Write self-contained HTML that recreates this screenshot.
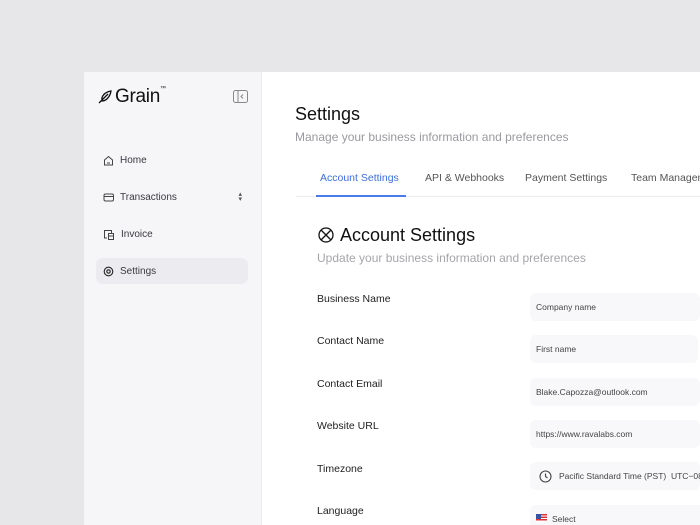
<!DOCTYPE html>
<html style="width:700px;height:525px;overflow:hidden"><head><style>
*{margin:0;padding:0;box-sizing:border-box}
body{width:700px;height:525px;background:#e7e6e8;font-family:"Liberation Sans",sans-serif;position:relative;overflow:hidden}
.card{position:absolute;left:84px;top:72px;width:616px;height:453px;background:#fff;border-top-left-radius:2px}
.side{position:absolute;left:0;top:0;width:178px;height:453px;background:#f6f5f8;border-right:1px solid #ebeaee}
.abs{position:absolute}
.nav{position:absolute;left:12px;width:152px;height:26px;border-radius:7px;font-size:10px;color:#3a3a40;display:flex;align-items:center;padding-left:7px}
.nav svg{margin-right:6px}
.lbl{position:absolute;left:317px;font-size:10.5px;color:#222}
.inp{position:absolute;left:530px;height:28px;background:#f8f7fa;border-radius:6px;font-size:8.5px;color:#444;display:flex;align-items:center;padding-left:6px;width:170px}
.tab{position:absolute;top:172px;font-size:10.5px;color:#555}
</style></head><body>
<div class="card"></div>
<div class="side abs" style="left:84px;top:72px"></div>
<svg class="abs" style="left:97px;top:89px" width="16" height="16" viewBox="0 0 16 16" fill="none" stroke="#111" stroke-width="1.3"><path d="M2 14 L7 9 M5 12 C4 7 8 3 14 2 C13 8 9 12 5 12Z M7 9 L11 5"/></svg>
<div class="abs" style="left:115px;top:86px;font-size:19px;color:#111;letter-spacing:-0.3px">Grain<span style="font-size:6px;vertical-align:top">™</span></div>
<svg class="abs" style="left:233px;top:90px" width="15" height="13" viewBox="0 0 15 13" fill="none" stroke="#888" stroke-width="1"><rect x="0.5" y="0.5" width="14" height="12" rx="2"/><path d="M5 1v11M10 4.5 8 6.5l2 2"/></svg>
<div class="nav" style="left:96px;top:147px"><svg width="11" height="11" viewBox="0 0 11 11" fill="none" stroke="#444" stroke-width="1"><path d="M1.5 10V5L5.5 1.5 9.5 5V10Z M4 8h3"/></svg>Home</div>
<div class="nav" style="left:96px;top:184px"><svg width="11" height="11" viewBox="0 0 11 11" fill="none" stroke="#444" stroke-width="1"><rect x="1" y="2" width="9.5" height="7" rx="1.5"/><path d="M1 4.5h9.5"/></svg>Transactions<span style="position:absolute;right:6px;font-size:7px;color:#555;line-height:5px">▴<br>▾</span></div>
<div class="nav" style="left:96px;top:221px"><svg width="12" height="11" viewBox="0 0 12 11" fill="none" stroke="#444" stroke-width="1"><path d="M4 9H1.5V1.5h7V4M5.5 4.5h5v6h-5ZM5.5 7h5"/></svg>Invoice</div>
<div class="nav" style="left:96px;top:258px;background:#ecebef"><svg width="11" height="11" viewBox="0 0 11 11" fill="none" stroke="#222" stroke-width="1.1"><circle cx="5.5" cy="5.5" r="4.3"/><circle cx="5.5" cy="5.5" r="1.7"/></svg>Settings</div>
<div class="abs" style="left:295px;top:104px;font-size:18px;color:#111">Settings</div>
<div class="abs" style="left:295px;top:130px;font-size:12px;color:#9a9aa0">Manage your business information and preferences</div>
<div class="tab" style="left:320px;color:#3b6fe0">Account Settings</div>
<div class="tab" style="left:425px">API &amp; Webhooks</div>
<div class="tab" style="left:525px">Payment Settings</div>
<div class="tab" style="left:631px;white-space:nowrap">Team Management</div>
<div class="abs" style="left:296px;top:196px;width:404px;height:1px;background:#ececef"></div>
<div class="abs" style="left:316px;top:195px;width:90px;height:2px;background:#4a7be8"></div>
<svg class="abs" style="left:318px;top:227px" width="16" height="16" viewBox="0 0 16 16" fill="none" stroke="#111" stroke-width="1.3"><circle cx="8" cy="8" r="7"/><path d="M3 3l10 10M13 3 3 13"/></svg>
<div class="abs" style="left:340px;top:225px;font-size:18px;color:#111">Account Settings</div>
<div class="abs" style="left:317px;top:251px;font-size:12px;color:#a5a5ab">Update your business information and preferences</div>
<div class="lbl" style="top:293px">Business Name</div>
<div class="lbl" style="top:335px">Contact Name</div>
<div class="lbl" style="top:378px">Contact Email</div>
<div class="lbl" style="top:420px">Website URL</div>
<div class="lbl" style="top:463px">Timezone</div>
<div class="lbl" style="top:505px">Language</div>
<div class="inp" style="top:293px">Company name</div>
<div class="inp" style="top:335px;width:168px">First name</div>
<div class="inp" style="top:378px">Blake.Capozza@outlook.com</div>
<div class="inp" style="top:420px">https://www.ravalabs.com</div>
<div class="inp" style="top:462px;white-space:nowrap;padding-left:9px;overflow:hidden"><svg width="13" height="13" viewBox="0 0 13 13" fill="none" stroke="#444" stroke-width="1.1" style="margin-right:7px;flex:none"><circle cx="6.5" cy="6.5" r="5.5"/><path d="M6.5 3.5v3l2 1.5"/></svg>Pacific Standard Time (PST)&nbsp;&nbsp;UTC−08</div>
<div class="inp" style="top:505px;height:20px;align-items:flex-start;padding-top:9px;white-space:nowrap;border-radius:6px 0 0 0"><span style="display:inline-block;width:11px;height:8px;margin-right:5px;background:repeating-linear-gradient(#d33 0 1.3px,#fff 1.3px 2.6px);position:relative"><span style="position:absolute;left:0;top:0;width:5px;height:4.5px;background:#3a4fa0"></span></span>Select</div>
</body></html>
